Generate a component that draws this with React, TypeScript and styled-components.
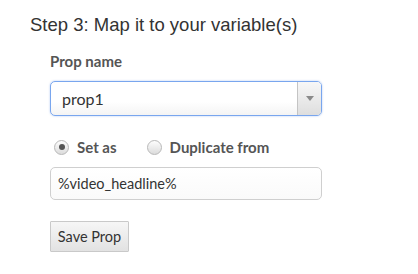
import React, { useState } from 'react'
import styled, { createGlobalStyle } from 'styled-components'

const GlobalStyle = createGlobalStyle`
  html, body {
    margin: 0;
    padding: 0;
    background: #fff;
  }
`

const Page = styled.div`
  padding: 14px 0 0 30px;
  font-family: Lato, 'Open Sans', sans-serif;
  color: #333;
`

const Heading = styled.h2`
  margin: 0;
  font-family: 'Liberation Sans', Arial, sans-serif;
  font-weight: 400;
  font-size: 18.5px;
  line-height: 22px;
  color: #333;
`

const Form = styled.div`
  width: 272px;
  margin: 16px 0 0 20px;
  display: flex;
  flex-direction: column;
`

const Label = styled.div`
  font-weight: 700;
  font-size: 15px;
  line-height: 18px;
  color: #555;
`

const SelectBox = styled.div`
  margin-top: 11px;
  height: 35px;
  box-sizing: border-box;
  display: flex;
  align-items: stretch;
  border: 1px solid #79a6ee;
  border-radius: 5px;
  box-shadow: 0 0 2px rgba(90, 140, 230, 0.5);
  background: linear-gradient(#fff, #fff 60%, #f4f4f4);
  overflow: hidden;
`

const SelectValue = styled.div`
  flex: 1;
  display: flex;
  align-items: center;
  padding-left: 11px;
  font-size: 16px;
  color: #333;
`

const SelectArrow = styled.div`
  width: 23px;
  border-left: 1px solid #c4c4c4;
  background: linear-gradient(#f7f7f7, #dedede);
  display: flex;
  align-items: center;
  justify-content: center;

  &:after {
    content: '';
    border-left: 4px solid transparent;
    border-right: 4px solid transparent;
    border-top: 5px solid #8a8a8a;
  }
`

const RadioRow = styled.div`
  margin-top: 22px;
  padding-left: 4px;
  display: flex;
  align-items: center;
  gap: 30px;
`

const RadioOption = styled.label`
  display: flex;
  align-items: center;
  gap: 8px;
  font-weight: 700;
  font-size: 15px;
  color: #555;
  cursor: pointer;
`

const RadioCircle = styled.span<{ checked: boolean }>`
  width: 15px;
  height: 15px;
  box-sizing: border-box;
  border-radius: 50%;
  border: 1px solid #b8b8b8;
  background: linear-gradient(#fdfdfd, #dcdcdc);
  display: flex;
  align-items: center;
  justify-content: center;

  &:after {
    content: '';
    width: 6px;
    height: 6px;
    border-radius: 50%;
    background: ${(p) => (p.checked ? '#555' : 'transparent')};
  }
`

const TextInput = styled.input`
  margin-top: 11px;
  height: 33px;
  box-sizing: border-box;
  border: 1px solid #cfcfcf;
  border-radius: 5px;
  background: linear-gradient(#fff, #fafafa);
  padding: 0 7px;
  font-family: Lato, 'Open Sans', sans-serif;
  font-size: 14.5px;
  color: #333;
  outline: none;
`

const SaveButton = styled.button`
  margin-top: 21px;
  align-self: flex-start;
  width: 79px;
  height: 31px;
  border: 1px solid #c9c9c9;
  border-radius: 1px;
  background: linear-gradient(#f6f6f6, #e2e2e2);
  font-family: Lato, 'Open Sans', sans-serif;
  font-size: 14.5px;
  color: #333;
  padding: 0;
`

export default function App() {
  const [mode, setMode] = useState<'set' | 'dup'>('set')
  const [value, setValue] = useState('%video_headline%')

  return (
    <Page>
      <GlobalStyle />
      <Heading>Step 3: Map it to your variable(s)</Heading>
      <Form>
        <Label>Prop name</Label>
        <SelectBox>
          <SelectValue>prop1</SelectValue>
          <SelectArrow />
        </SelectBox>
        <RadioRow>
          <RadioOption onClick={() => setMode('set')}>
            <RadioCircle checked={mode === 'set'} />
            Set as
          </RadioOption>
          <RadioOption onClick={() => setMode('dup')}>
            <RadioCircle checked={mode === 'dup'} />
            Duplicate from
          </RadioOption>
        </RadioRow>
        <TextInput value={value} onChange={(e) => setValue(e.target.value)} />
        <SaveButton>Save Prop</SaveButton>
      </Form>
    </Page>
  )
}
